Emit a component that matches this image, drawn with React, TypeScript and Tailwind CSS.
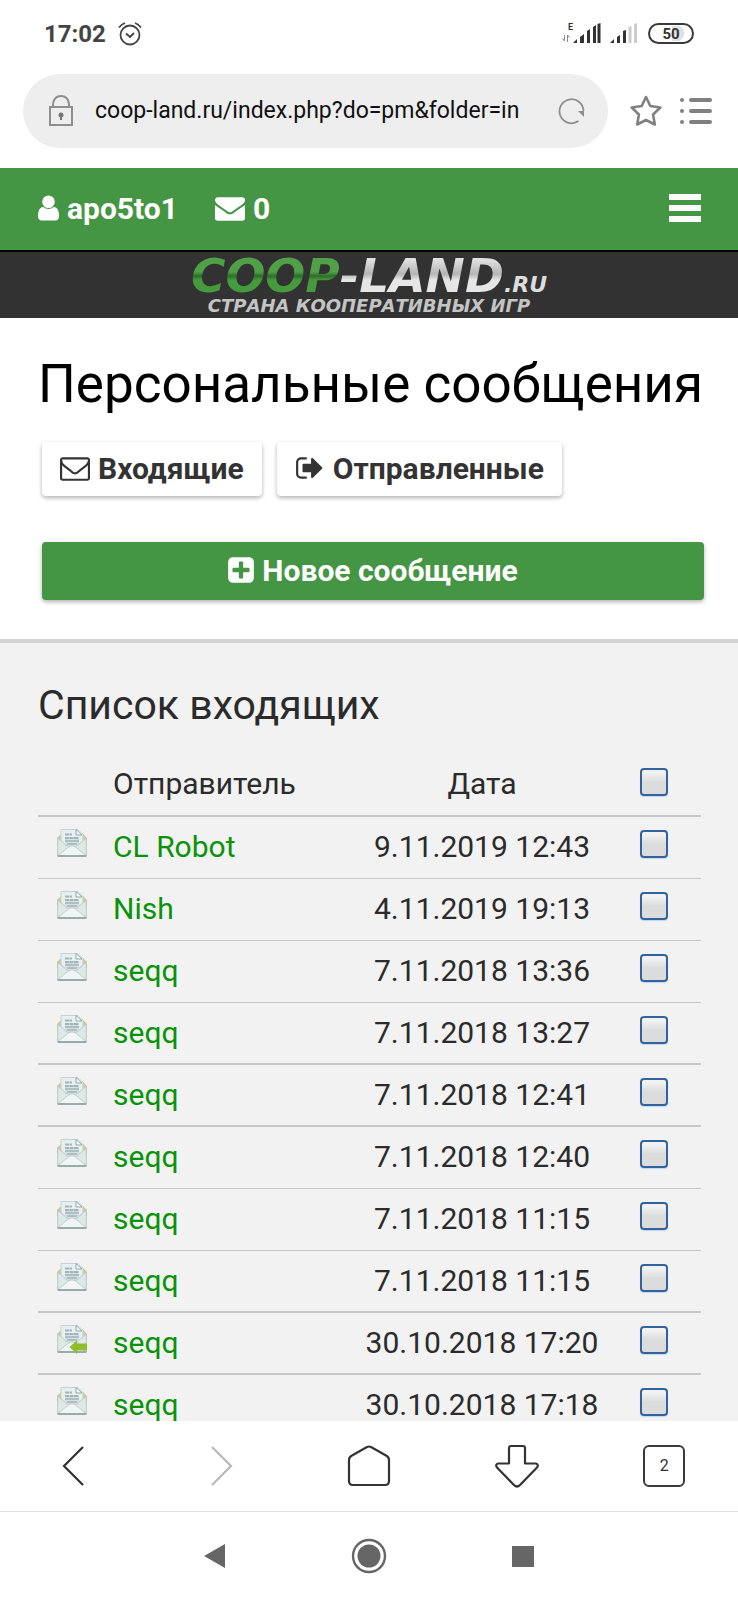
import type { ReactNode } from "react";

type Message = {
  from: string;
  date: string;
  replied?: boolean;
  thick?: boolean;
};

const messages: Message[] = [
  { from: "CL Robot", date: "9.11.2019 12:43" },
  { from: "Nish", date: "4.11.2019 19:13" },
  { from: "seqq", date: "7.11.2018 13:36" },
  { from: "seqq", date: "7.11.2018 13:27", thick: true },
  { from: "seqq", date: "7.11.2018 12:41", thick: true },
  { from: "seqq", date: "7.11.2018 12:40" },
  { from: "seqq", date: "7.11.2018 11:15" },
  { from: "seqq", date: "7.11.2018 11:15", thick: true },
  { from: "seqq", date: "30.10.2018 17:20", replied: true, thick: true },
  { from: "seqq", date: "30.10.2018 17:18" },
];

const Glyph = ({
  viewBox,
  className,
  d,
}: {
  viewBox: string;
  className: string;
  d: string;
}) => (
  <svg viewBox={viewBox} className={`shrink-0 ${className}`} fill="currentColor" aria-hidden="true">
    <path d={d} />
  </svg>
);

const UserIcon = () => (
  <Glyph
    viewBox="256 0 1280 1792"
    className="w-[21px] h-[30px]"
    d="M1536 1399q0 109-62.5 187t-150.5 78h-854q-88 0-150.5-78t-62.5-187q0-85 8.5-160.5t31.5-152 58.5-131 94-89 134.5-34.5q131 128 313 128t313-128q76 0 134.5 34.5t94 89 58.5 131 31.5 152 8.5 160.5zm-256-887q0 159-112.5 271.5t-271.5 112.5-271.5-112.5-112.5-271.5 112.5-271.5 271.5-112.5 271.5 112.5 112.5 271.5z"
  />
);

const EnvelopeIcon = () => (
  <Glyph
    viewBox="0 0 1792 1792"
    className="w-[30px] h-[30px]"
    d="M1792 710v794q0 66-47 113t-113 47h-1472q-66 0-113-47t-47-113v-794q44 49 101 87 362 246 497 345 57 42 92.5 65.5t94.5 48 110 24.5h2q51 0 110-24.5t94.5-48 92.5-65.5q170-123 498-345 57-39 100-87zm0-294q0 79-49 151t-122 123q-376 261-468 325-10 7-42.5 31t-54 38.5-52 32.5-57.5 27-50 9h-2q-23 0-50-9t-57.5-27-52-32.5-54-38.5-42.5-31q-91-64-262-182.5t-205-142.5q-62-42-117-115.5t-55-136.5q0-78 41.5-130t118.5-52h1472q65 0 112.5 47t47.5 113z"
  />
);

const EnvelopeOutlineIcon = () => (
  <Glyph
    viewBox="0 0 1792 1792"
    className="w-[30px] h-[30px]"
    d="M1664 1504v-768q-32 36-69 66-268 206-426 338-51 43-83 67t-86.5 48.5-102.5 24.5h-2q-48 0-102.5-24.5t-86.5-48.5-83-67q-158-132-426-338-37-30-69-66v768q0 13 9.5 22.5t22.5 9.5h1472q13 0 22.5-9.5t9.5-22.5zm0-1051v-24.5l-.5-13-3-12.5-5.5-9-9-7.5-14-2.5h-1472q-13 0-22.5 9.5t-9.5 22.5q0 168 147 284 193 152 401 317 6 5 35 29.5t46 37.5 44.5 31.5 50.5 27.5 43 9h2q20 0 43-9t50.5-27.5 44.5-31.5 46-37.5 35-29.5q208-165 401-317 54-43 100.5-115.5t46.5-131.5zm128-37v1088q0 66-47 113t-113 47h-1472q-66 0-113-47t-47-113v-1088q0-66 47-113t113-47h1472q66 0 113 47t47 113z"
  />
);

const SignOutIcon = () => (
  <Glyph
    viewBox="0 0 1792 1792"
    className="w-[30px] h-[30px]"
    d="M704 1440q0 4 1 20t.5 26.5-3 23.5-10 19.5-20.5 6.5h-320q-119 0-203.5-84.5t-84.5-203.5v-704q0-119 84.5-203.5t203.5-84.5h320q13 0 22.5 9.5t9.5 22.5q0 4 1 20t.5 26.5-3 23.5-10 19.5-20.5 6.5h-320q-66 0-113 47t-47 113v704q0 66 47 113t113 47h312l11.5 1 11.5 3 8 5.5 7 9 2 13.5zm928-544q0 26-19 45l-544 544q-19 19-45 19t-45-19-19-45v-288h-448q-26 0-45-19t-19-45v-384q0-26 19-45t45-19h448v-288q0-26 19-45t45-19 45 19l544 544q19 19 19 45z"
  />
);

const PlusSquareIcon = () => (
  <Glyph
    viewBox="128 0 1536 1792"
    className="w-[26px] h-[30px]"
    d="M1408 960v-128q0-26-19-45t-45-19h-320v-320q0-26-19-45t-45-19h-128q-26 0-45 19t-19 45v320h-320q-26 0-45 19t-19 45v128q0 26 19 45t45 19h320v320q0 26 19 45t45 19h128q26 0 45-19t19-45v-320h320q26 0 45-19t19-45zm256-544v960q0 119-84.5 203.5t-203.5 84.5h-960q-119 0-203.5-84.5t-84.5-203.5v-960q0-119 84.5-203.5t203.5-84.5h960q119 0 203.5 84.5t84.5 203.5z"
  />
);

// Opened letter, with a green arrow once it has been answered
const LetterIcon = ({ replied }: { replied?: boolean }) => (
  <svg
    viewBox="0 0 30 30"
    className="w-[30px] h-[30px]"
    role="img"
    aria-label={replied ? "Отвечено" : "Прочитано"}
  >
    <path d="M0 10 5 5h20l5 5v6H0z" fill="#d9c389" />
    <path d="M4 1.500h17l5 5V22H4z" fill="#e6eff1" stroke="#c6d3d4" />
    <path d="M19 1.500v5.500h6z" fill="#f8fbfb" stroke="#93a9ac" />
    <path
      d="M8 6.500h7M8 10h14M8 13h14M10 16h10"
      stroke="#a3b4b9"
      strokeWidth="1.800"
      strokeDasharray="4 .5"
    />
    <path d="M.7 10 10 18h10l9.300-8v17.500H.7z" fill="#dde8e8" stroke="#b9c8c8" />
    <path d="M8 11h14v5l-3 2h-8l-3-2z" fill="#d3dfe1" />
    <path d="M8 13h14M10 16h10" stroke="#a3b4b9" strokeWidth="1.600" />
    <path d="M1 27.500 11.500 19q3.500-2.500 7 0L29 27.500z" fill="#f0f6f6" stroke="#c3d0d0" />
    <path d="M.5 28h29" stroke="#9aabab" strokeWidth="2" />
    {replied && <path d="M12.500 23 20 16.500v3h10v7H20v3.500z" fill="#8fbe2a" />}
  </svg>
);

const AlarmIcon = () => (
  <svg viewBox="0 0 24 24" className="w-6 h-6" fill="none" stroke="#444" strokeWidth="1.800" aria-hidden="true">
    <circle cx="12" cy="13" r="9.500" />
    <path d="m8 11.500 4 3.500 4-4M1 5.500q2-3 6-4.500M23 5.500q-2-3-6-4.500" />
  </svg>
);

const StatusIcons = () => (
  <svg viewBox="0 0 134 24" className="w-[134px] h-6" aria-hidden="true">
    <g fill="none" stroke="#888">
      <path d="M3.500 13v6l-2-2.500M6.500 20v-7l2 2.500" />
    </g>
    <text x="7" y="8" fontSize="9" fontWeight="700" fill="#333">E</text>
    <g fill="#333">
      <path d="M12 21l4-4v4zM19 21v-6l4-3v9zM26 21V9l3-2v14zM32 21V5l3-2v18zM36.500 21V2l3-1v20z" />
      <path d="M49 21l4-4v4zM56 21v-6l3-2v8zM62 21V9l3-1v13z" />
    </g>
    <path d="M67.500 21V5l3-1v17zM73 21V2l3-1v20z" fill="#ccc" />
    <path d="M111 4h8q9 7 0 15h-8z" fill="#e2e2e2" />
    <rect x="88" y="2" width="44" height="19" rx="9.500" fill="none" stroke="#3a3a3a" strokeWidth="2" />
    <text x="110" y="17" textAnchor="middle" fontSize="15" fontWeight="700" fill="#333">50</text>
  </svg>
);

const Checkbox = ({ label }: { label: string }) => (
  <input
    type="checkbox"
    aria-label={label}
    className="block mx-auto w-7 h-7 appearance-none rounded border-2 border-[#33639c] bg-linear-to-b from-[#f2f2f2] from-10% to-[#dcdcdc] to-50% shadow-[0_1px_1px_#bcd8f3]"
  />
);

const FolderButton = ({ icon, children }: { icon: ReactNode; children: ReactNode }) => (
  <button className="flex items-center gap-2 h-[54px] px-[18px] pb-[2px] rounded bg-white text-[30px] font-bold text-[#333] shadow-[0_2px_4px_rgba(0,0,0,0.3)]">
    {icon}
    {children}
  </button>
);

const BrowserBar = () => (
  <div className="flex items-center h-[102px] pb-3 pl-[23px] pr-[26px] shrink-0">
    <div className="flex flex-1 items-center h-[74px] pl-[25px] pr-[22px] rounded-full bg-[#eee]">
      <svg viewBox="0 0 26 32" className="w-[26px] h-8 shrink-0" fill="none" stroke="#8e8e8e" strokeWidth="2" aria-hidden="true">
        <path d="M2 12h22v18H2zM5 12V9q1-8 8-8t8 8v3" />
        <circle cx="13" cy="20" r="2.500" fill="#777" stroke="none" />
        <path d="M13 20v5" stroke="#777" />
      </svg>
      <input
        type="text"
        aria-label="Адрес страницы"
        defaultValue="coop-land.ru/index.php?do=pm&folder=in"
        className="flex-1 min-w-0 ml-[21px] text-[23px] text-[#111] outline-none"
      />
      <button aria-label="Обновить">
        <svg viewBox="0 0 28 28" className="w-7 h-7" fill="none" stroke="#8e8e8e" strokeWidth="1.800">
          <path d="M25.500 14A12 12 0 1 0 20.500 24" />
          <path d="M20 14h6v6z" fill="#8e8e8e" stroke="none" />
        </svg>
      </button>
    </div>
    <button aria-label="Закладки" className="ml-[22px]">
      <svg viewBox="0 0 32 32" className="w-8 h-8" fill="none" stroke="#808080" strokeWidth="2.600" strokeLinejoin="round">
        <path d="m16 2 4.300 9 10 1.500-7.200 7 1.700 10L16 25l-8.800 4.500 1.700-10-7.200-7 10-1.500z" />
      </svg>
    </button>
    <button aria-label="Меню браузера" className="ml-[18px]">
      <svg viewBox="0 0 32 30" className="w-8 h-[30px]" stroke="#808080" strokeWidth="4" strokeLinecap="round">
        <path d="M2 4h.01M2 15h.01M2 26h.01M11 4h19M11 15h19M11 26h19" />
      </svg>
    </button>
  </div>
);

const SiteHeader = () => (
  <header className="shrink-0">
    <div className="flex items-center h-[84px] pl-[38px] pr-[37px] pb-[2px] bg-[#449644] border-b-2 border-black text-[30px] font-bold text-white">
      <a href="#profile" className="flex items-center gap-2">
        <UserIcon />
        apo5to1
      </a>
      <a href="#inbox" className="flex items-center gap-2 ml-[37px]">
        <EnvelopeIcon />0
      </a>
      <button aria-label="Меню" className="flex flex-col gap-[5px] ml-auto">
        <span className="w-8 h-[6px] bg-white" />
        <span className="w-8 h-[6px] bg-white" />
        <span className="w-8 h-[6px] bg-white" />
      </button>
    </div>
    <a
      href="#home"
      className="flex flex-col items-center h-[66px] pt-1 bg-[#323232] font-['DejaVu_Sans',sans-serif] font-bold italic"
    >
      <span className="flex items-baseline h-10 text-[47px] leading-10 text-transparent">
        <span className="bg-clip-text bg-linear-to-b from-[#4fa046] from-40% via-[#2c6c29] via-50% to-[#459a3e] to-60%">
          COOP
        </span>
        <span className="bg-clip-text bg-linear-to-b from-[#e0e0e0] from-10% via-[#b5b5b5] via-45% to-[#e6e6e6] to-60%">
          -LAND
        </span>
        <span className="text-[22px] text-[#ddd]">.RU</span>
      </span>
      <span className="text-[18px] leading-5 text-[#c4c4c4]">СТРАНА КООПЕРАТИВНЫХ ИГР</span>
    </a>
  </header>
);

const BottomBars = () => (
  <footer className="shrink-0 bg-white">
    <nav className="grid grid-cols-5 items-center justify-items-center h-[91px] border-b border-[#e0e0e0]">
      <button aria-label="Назад">
        <svg viewBox="0 0 44 44" className="w-11 h-11" fill="none" stroke="#333" strokeWidth="2.200">
          <path d="M31 3 12 22l19 19" />
        </svg>
      </button>
      <button aria-label="Вперёд">
        <svg viewBox="0 0 44 44" className="w-11 h-11" fill="none" stroke="#b8b8b8" strokeWidth="2.200">
          <path d="m13 3 19 19-19 19" />
        </svg>
      </button>
      <button aria-label="Домой">
        <svg viewBox="0 0 44 44" className="w-11 h-11" fill="none" stroke="#333" strokeWidth="2.200">
          <path d="M2 16q0-3 3-4.500L20 3q2-1 4 0l15 8.500q3 1.500 3 4.500v21q0 4-4 4H6q-4 0-4-4z" />
        </svg>
      </button>
      <button aria-label="Загрузки">
        <svg viewBox="0 0 44 44" className="w-11 h-11" fill="none" stroke="#333" strokeWidth="2.200" strokeLinejoin="round">
          <path d="M14 19.500V4q0-2 2-2h12q2 0 2 2v15.500h11q3 1 1 4L25 41q-3 3-6 0L2 23.500q-2-3 1-4z" />
        </svg>
      </button>
      <button
        aria-label="Вкладки"
        className="w-[42px] h-[42px] rounded-md border-2 border-[#3a3a3a] text-base text-[#333]"
      >
        2
      </button>
    </nav>
    <nav className="flex justify-center items-center h-[88px] gap-[125px]">
      <button aria-label="Системная кнопка «Назад»">
        <svg viewBox="0 0 22 26" className="w-[22px] h-[26px]" fill="#666">
          <path d="M0 13 21 1v24z" />
        </svg>
      </button>
      <button aria-label="Главный экран">
        <svg viewBox="0 0 36 36" className="w-9 h-9" fill="none" stroke="#666" strokeWidth="2.400">
          <circle cx="18" cy="18" r="16" />
          <circle cx="18" cy="18" r="11.500" fill="#666" stroke="none" />
        </svg>
      </button>
      <button aria-label="Недавние приложения" className="w-[22px] h-[21px] bg-[#666]" />
    </nav>
  </footer>
);

const App = () => {
  return (
    <div className="flex flex-col h-screen overflow-hidden bg-white font-[Roboto,sans-serif] text-[#2b2b2b]">
      {/* Phone status bar */}
      <div className="flex items-center justify-between h-[66px] pt-[2px] pl-[44px] pr-[43px] shrink-0">
        <div className="flex items-center gap-3 text-2xl font-bold text-[#444]">
          17:02
          <AlarmIcon />
        </div>
        <StatusIcons />
      </div>

      <BrowserBar />
      <SiteHeader />

      <main className="flex-1 min-h-0 overflow-hidden">
        <section className="px-[38px] pt-9 pb-[39px] border-b-4 border-[#d4d4d4]">
          <h1 className="text-[53px] leading-[60px] text-black whitespace-nowrap">
            Персональные сообщения
          </h1>
          <div className="flex gap-[15px] mt-7 ml-1">
            <FolderButton icon={<EnvelopeOutlineIcon />}>Входящие</FolderButton>
            <FolderButton icon={<SignOutIcon />}>Отправленные</FolderButton>
          </div>
          <div className="flex mt-[46px] ml-1 -mr-1">
            <button className="flex flex-1 items-center justify-center gap-2 h-[58px] pb-[2px] rounded bg-[#449644] text-[30px] font-bold text-white shadow-[0_2px_4px_rgba(0,0,0,0.3)]">
              <PlusSquareIcon />
              Новое сообщение
            </button>
          </div>
        </section>

        {/* Inbox */}
        <section className="pl-[38px] pr-[37px] pt-9 bg-[#f2f2f2]">
          <h2 className="text-[41px] leading-[52px]">Список входящих</h2>
          <table className="w-full mt-[21px] table-fixed text-[30px] leading-9">
            <thead>
              <tr className="h-[64px] border-b-2 border-[#c8c8c8]">
                <td className="w-[75px]" />
                <th scope="col" className="font-normal text-left">Отправитель</th>
                <th scope="col" className="w-[250px] font-normal">Дата</th>
                <th scope="col" className="w-[94px] pb-1">
                  <Checkbox label="Выбрать все" />
                </th>
              </tr>
            </thead>
            <tbody>
              {messages.map((m, i) => (
                <tr
                  key={i}
                  className={`h-[62px] border-[#c8c8c8] ${m.thick ? "border-b-2" : "border-b"}`}
                >
                  <td className="pl-[19px] pb-2">
                    <LetterIcon replied={m.replied} />
                  </td>
                  <td>
                    <a href={`#message-${i + 1}`} className="text-[#0a930a]">
                      {m.from}
                    </a>
                  </td>
                  <td className="text-center whitespace-nowrap">{m.date}</td>
                  <td className="pb-[6px]">
                    <Checkbox label={`Выбрать: ${m.from}, ${m.date}`} />
                  </td>
                </tr>
              ))}
            </tbody>
          </table>
        </section>
      </main>

      <BottomBars />
    </div>
  );
};

export default App;
